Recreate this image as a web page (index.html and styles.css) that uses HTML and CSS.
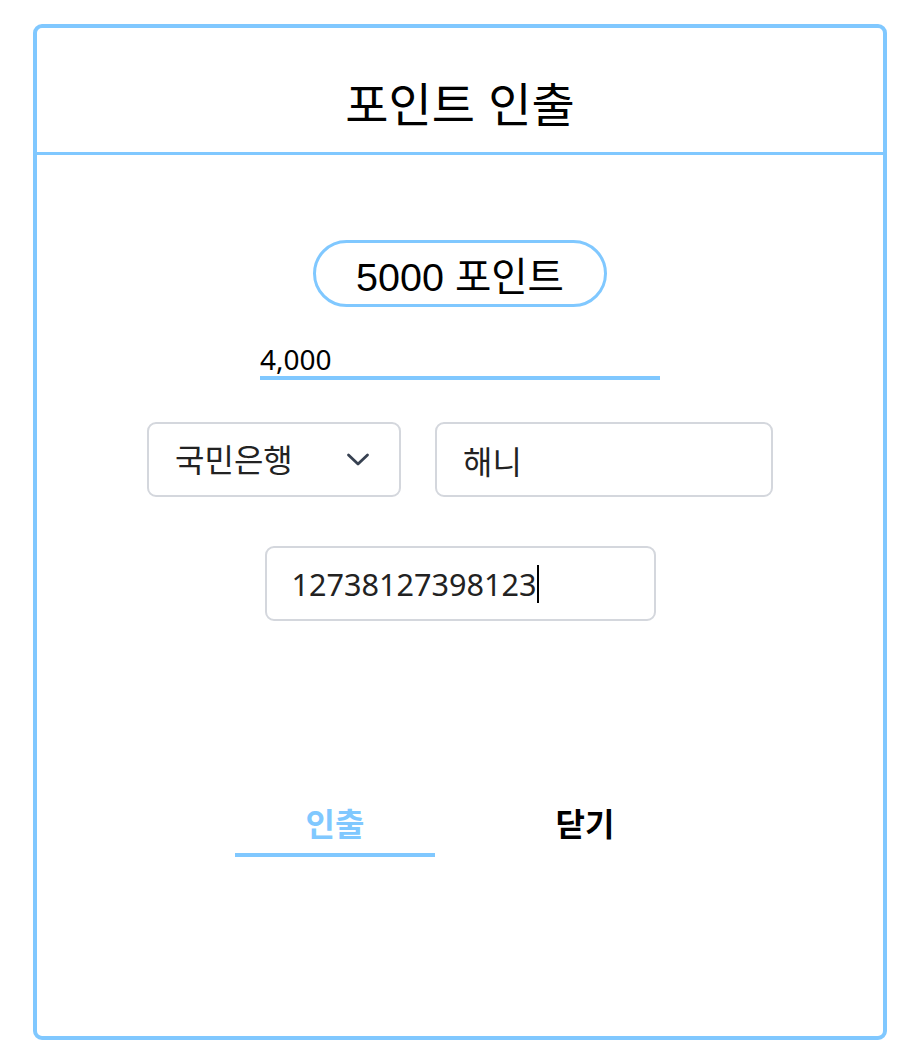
FILE: index.html
```html
<!DOCTYPE html>
<html lang="ko">
<head>
<meta charset="utf-8">
<title>포인트 인출</title>
<link rel="stylesheet" href="styles.css">
</head>
<body>
<div class="modal">
  <div class="modal-header">
    <h1 class="modal-title">포인트 인출</h1>
  </div>
  <div class="modal-body">
    <div class="points-pill">5000 포인트</div>
    <input class="amount-input" type="text" value="4,000">
    <div class="field-row">
      <div class="select-wrap">
        <select class="field field-bank">
          <option>국민은행</option>
          <option>신한은행</option>
          <option>우리은행</option>
        </select>
        <svg class="chevron" width="26" height="26" viewBox="0 0 26 26"><path d="M2.5 8l9.5 9 9.5-9" fill="none" stroke="#374151" stroke-width="2.8" stroke-linecap="round" stroke-linejoin="round"/></svg>
      </div>
      <input class="field field-name" type="text" value="해니">
    </div>
    <div class="field-row">
      <div class="field field-account"><span class="account-value">12738127398123</span><span class="caret"></span></div>
    </div>
    <div class="actions">
      <button class="action action-primary" type="button">인출</button>
      <button class="action action-close" type="button">닫기</button>
    </div>
  </div>
</div>
</body>
</html>
```
FILE: styles.css
```css
* { box-sizing: border-box; }
html, body { margin: 0; padding: 0; background: #fff; }
body { font-family: "Liberation Sans", "Noto Sans CJK KR", sans-serif; color: #000; }

.modal {
  width: 854px;
  height: 1016px;
  margin: 24px 0 0 33px;
  border: 4px solid #80c8ff;
  border-radius: 9px;
  display: flex;
  flex-direction: column;
}

.modal-header {
  height: 127px;
  border-bottom: 3px solid #80c8ff;
  padding-top: 50px;
}
.modal-title {
  margin: 0;
  font-size: 47px;
  line-height: 56px;
  font-weight: 400;
  text-align: center;
}

.modal-body {
  display: flex;
  flex-direction: column;
  align-items: center;
  padding-top: 85px;
}

.points-pill {
  width: 294px;
  height: 67px;
  border: 3px solid #80c8ff;
  border-radius: 34px;
  display: flex;
  align-items: center;
  justify-content: center;
  font-size: 39.5px;
}

.amount-input {
  margin-top: 29px;
  width: 400px;
  height: 44px;
  border: 0;
  border-bottom: 4px solid #80c8ff;
  padding: 6px 0 0 0;
  font-family: "Noto Sans", "Noto Sans CJK KR", sans-serif;
  font-size: 28px;
  color: #000;
  outline: none;
  background: transparent;
}

.field-row {
  display: flex;
  gap: 34px;
  margin-top: 42px;
}
.field-row + .field-row { margin-top: 49px; }

.field {
  height: 75px;
  border: 2px solid #d4d7dd;
  border-radius: 9px;
  background: #fff;
  font-family: "Noto Sans", "Noto Sans CJK KR", sans-serif;
  font-size: 32px;
  color: #222;
  padding: 0 0 0 26px;
  outline: none;
}

.select-wrap { position: relative; }
.field-bank {
  width: 254px;
  appearance: none;
  -webkit-appearance: none;
}
.chevron {
  position: absolute;
  left: 199px;
  top: 25px;
  pointer-events: none;
}

.field-name { width: 338px; }

.field-account {
  width: 391px;
  display: flex;
  align-items: center;
  font-size: 30.6px;
  padding-left: 25px;
}
.caret {
  display: inline-block;
  width: 2px;
  height: 38px;
  background: #000;
  margin-left: 0;
}

.actions {
  display: flex;
  gap: 50px;
  margin-top: 175px;
}
.action {
  width: 200px;
  height: 61px;
  border: 0;
  border-bottom: 4px solid transparent;
  background: transparent;
  padding: 0 0 5px 0;
  font-family: "Liberation Sans", "Noto Sans CJK KR", sans-serif;
  font-size: 32px;
  font-weight: 700;
  cursor: pointer;
}
.action-primary { color: #80c8ff; border-bottom-color: #80c8ff; }
.action-close { color: #000; }
```
